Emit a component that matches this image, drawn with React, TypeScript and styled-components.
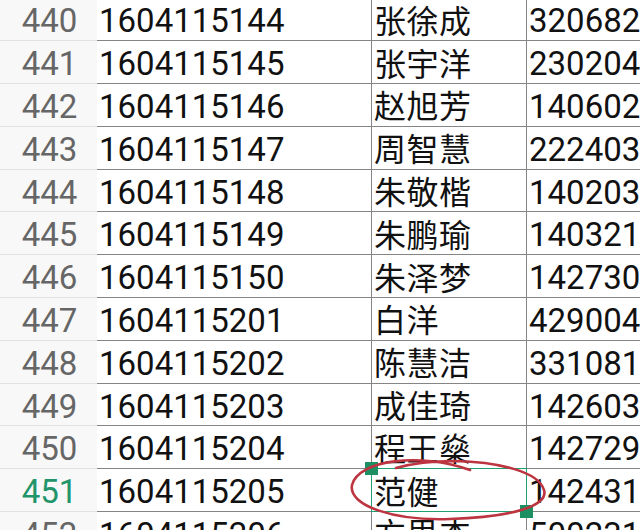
import React from "react";
import styled, { createGlobalStyle } from "styled-components";

const Global = createGlobalStyle`
  html, body { margin: 0; padding: 0; background: #ffffff; overflow: hidden; }
  #root { width: 640px; height: 530px; overflow: hidden; position: relative; }
`;

const Sheet = styled.div`
  position: relative;
  margin-top: -1.5px;
  width: 640px;
  display: flex;
  flex-direction: column;
  font-family: Roboto, "Noto Sans CJK SC", sans-serif;
`;

const Row = styled.div`
  display: grid;
  grid-template-columns: 97px 275px 155px 160px;
  height: 42.8px;
`;

const Header = styled.div<{ $active?: boolean }>`
  background: #f8f8f8;
  border-bottom: 1px solid #e2e2e2;
  color: ${(p) => (p.$active ? "#22946a" : "#666666")};
  font-size: 33px;
  line-height: 1;
  display: flex;
  align-items: center;
  justify-content: center;
  padding: 3px 0 0 2px;
  box-sizing: border-box;
`;

const Cell = styled.div<{ $right?: boolean }>`
  position: relative;
  border-bottom: 1px solid #858585;
  border-right: ${(p) => (p.$right ? "1px solid #858585" : "none")};
  color: #111111;
  font-size: 33px;
  line-height: 1;
  display: flex;
  align-items: center;
  padding: 3px 0 0 2px;
  box-sizing: border-box;
  white-space: nowrap;
`;

const NameText = styled.span`
  font-family: "Noto Sans CJK SC", sans-serif;
  font-size: 32px;
  line-height: 1;
  letter-spacing: 0.5px;
  position: relative;
  top: -2px;
`;

const Selection = styled.div`
  position: absolute;
  z-index: 2;
  left: -1px;
  top: -1px;
  right: -1px;
  bottom: -1px;
  border: 1.5px solid #21a06f;
  pointer-events: none;
`;

const Handle = styled.div<{ $pos: "tl" | "br" }>`
  position: absolute;
  width: 13px;
  height: 13px;
  background: #1c8f63;
  ${(p) =>
    p.$pos === "tl"
      ? "left: -7px; top: -7px;"
      : "right: -7px; bottom: -7px;"}
`;

const Marker = styled.svg`
  position: absolute;
  z-index: 3;
  left: 0;
  top: 0;
  pointer-events: none;
`;

const rows: [string, string, string, string][] = [
  ["440", "1604115144", "张徐成", "320682"],
  ["441", "1604115145", "张宇洋", "230204"],
  ["442", "1604115146", "赵旭芳", "140602"],
  ["443", "1604115147", "周智慧", "222403"],
  ["444", "1604115148", "朱敬楷", "140203"],
  ["445", "1604115149", "朱鹏瑜", "140321"],
  ["446", "1604115150", "朱泽梦", "142730"],
  ["447", "1604115201", "白洋", "429004"],
  ["448", "1604115202", "陈慧洁", "331081"],
  ["449", "1604115203", "成佳琦", "142603"],
  ["450", "1604115204", "程王燊", "142729"],
  ["451", "1604115205", "范健", "142431"],
  ["452", "1604115206", "方思杰", "500231"],
];

export default function App() {
  return (
    <>
      <Global />
      <Sheet>
        {rows.map(([n, id, name, card]) => {
          const active = n === "451";
          return (
            <Row key={n}>
              <Header $active={active}>{n}</Header>
              <Cell $right>{id}</Cell>
              <Cell $right>
                <NameText>{name}</NameText>
                {active && (
                  <Selection>
                    <Handle $pos="tl" />
                    <Handle $pos="br" />
                  </Selection>
                )}
              </Cell>
              <Cell>{card}</Cell>
            </Row>
          );
        })}
      </Sheet>
      <Marker width="640" height="530" viewBox="0 0 640 530">
        <path
          d="M 470 470 C 420 452, 358 460, 352 485 C 348 506, 395 521, 450 519 C 512 517, 549 506, 544 490 C 539 472, 500 462, 455 461 C 430 461, 410 464, 396 468"
          fill="none"
          stroke="#bd3540"
          strokeWidth="2.6"
          strokeLinecap="round"
        />
      </Marker>
    </>
  );
}
